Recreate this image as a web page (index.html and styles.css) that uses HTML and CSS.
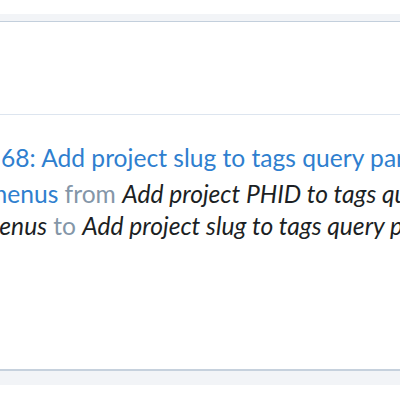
FILE: index.html
```html
<!DOCTYPE html>
<html lang="en">
<head>
    <meta charset="UTF-8">
    <meta name="viewport" content="width=device-width, initial-scale=1.0">
    <title>Revision</title>
    <link rel="stylesheet" href="styles.css">
</head>
<body>
    <div class="top-strip"></div>

    <div class="panel-head"></div>

    <div class="story">
        <div class="story-title">
            <a class="link">68: Add project slug to tags query parameter</a>
        </div>
        <div class="story-line line-two">
            <a class="link">menus</a> <span class="muted">from</span>
            <em class="obj">Add project PHID to tags query parameter</em>
        </div>
        <div class="story-line line-three">
            <em class="obj">menus</em> <span class="muted">to</span>
            <em class="obj">Add project slug to tags query parameter</em>
        </div>
    </div>

    <div class="bottom-strip"></div>
</body>
</html>
```

FILE: styles.css
```css
* {
    margin: 0;
    padding: 0;
    box-sizing: border-box;
}

body {
    font-family: Lato, "Open Sans", sans-serif;
    background: #ffffff;
    width: 400px;
    height: 400px;
    overflow: hidden;
}

.top-strip {
    height: 22px;
    background: linear-gradient(to bottom, #ffffff 0, #ffffff 14px, #f2f4f7 14px, #f2f4f7 100%);
    border-bottom: 1px solid #c3cfdc;
}

.panel-head {
    height: 93px;
    background: #ffffff;
    border-bottom: 1px solid #dde5ef;
}

.story {
    height: 254px;
    padding-top: 27px;
    overflow: hidden;
    white-space: nowrap;
    font-size: 24.6px;
    line-height: 32px;
}

.story-title {
    height: 36px;
    margin-left: 1px;
}

.line-two {
    margin-left: -13px;
}

.line-three {
    margin-left: -20px;
}

.link {
    color: #2f7fcf;
    text-decoration: none;
}

.muted {
    color: #8496a8;
}

.obj {
    font-style: italic;
    color: #1c1f24;
}

.bottom-strip {
    height: 16px;
    border-top: 2px solid #c6d1dd;
    background: #f2f4f7;
}
```
